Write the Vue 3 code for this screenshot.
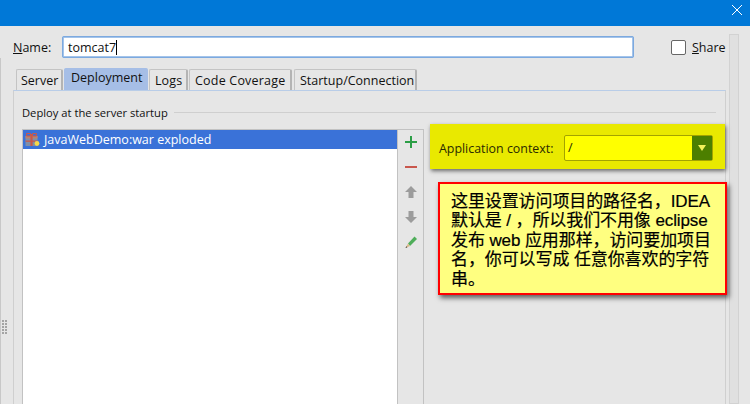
<script setup>
const tabs = [
  { label: 'Server', active: false },
  { label: 'Deployment', active: true },
  { label: 'Logs', active: false },
  { label: 'Code Coverage', active: false },
  { label: 'Startup/Connection', active: false }
]
const grip = Array.from({ length: 10 })
</script>

<template>
  <div class="window">
    <header class="titlebar">
      <svg class="close" width="12" height="12" viewBox="0 0 12 12"><path d="M1 1 L11 11 M11 1 L1 11" stroke="#fff" stroke-width="1" fill="none" /></svg>
    </header>
    <div class="content">
      <div class="left-edge">
        <div class="grip"><i v-for="(g, i) in grip" :key="i"></i></div>
      </div>
      <main class="main">
        <div class="name-row">
          <label class="name-label"><u>N</u>ame:</label>
          <div class="name-input"><span>tomcat7</span><b class="caret"></b></div>
          <div class="share"><span class="check"></span><span><u>S</u>hare</span></div>
        </div>
        <nav class="tabs">
          <div v-for="t in tabs" :key="t.label" class="tab" :class="{ active: t.active }">{{ t.label }}</div>
        </nav>
        <section class="panel">
          <div class="group-title"><span>Deploy at the server startup</span><i></i></div>
          <div class="deploy">
            <div class="list">
              <div class="row">
                <svg class="artifact" width="15" height="15" viewBox="0 0 15 15">
                  <rect x="0.5" y="4" width="12" height="10" fill="#7f8ea8" />
                  <rect x="0.5" y="4" width="12" height="2.5" fill="#b9826f" />
                  <rect x="5.4" y="2" width="2.2" height="12" fill="#c9584a" />
                  <path d="M1.5 1.5 H5.5 V4 H1.5 Z M11.5 1.5 H7.5 V4 H11.5 Z" stroke="#c9584a" fill="none" />
                  <rect x="0.5" y="8.5" width="12" height="1.3" fill="#c9584a" />
                  <circle cx="12" cy="11.5" r="2.4" fill="#f5d94a" />
                </svg>
                <span>JavaWebDemo:war exploded</span>
              </div>
            </div>
            <div class="tools">
              <svg width="14" height="14" viewBox="0 0 14 14"><path d="M7 1 V13 M1 7 H13" stroke="#2c9e46" stroke-width="2" fill="none" /></svg>
              <svg width="14" height="14" viewBox="0 0 14 14"><path d="M1 7 H13" stroke="#c9574d" stroke-width="2" fill="none" /></svg>
              <svg width="14" height="14" viewBox="0 0 14 14"><path d="M7 1 L13 7 H9.5 V13 H4.5 V7 H1 Z" fill="#9c9c9c" /></svg>
              <svg width="14" height="14" viewBox="0 0 14 14"><path d="M7 13 L13 7 H9.5 V1 H4.5 V7 H1 Z" fill="#9c9c9c" /></svg>
              <svg width="14" height="14" viewBox="0 0 14 14">
                <path d="M4 8.5 L10.5 1.5 L13 4 L6 11 Z" fill="#4fae5a" />
                <path d="M4 8.5 L6 11 L1.5 13 Z" fill="#d9b98a" />
                <path d="M2.4 11.2 L3.4 12.2 L1.5 13 Z" fill="#333" />
              </svg>
            </div>
            <div class="side"></div>
          </div>
        </section>
      </main>
      <aside class="scrollbar"></aside>
    </div>

    <div class="context-popup">
      <span class="context-label">Application context:</span>
      <div class="combo">
        <span class="combo-value">/</span>
        <span class="combo-btn"><i></i></span>
      </div>
    </div>

    <div class="note">这里设置访问项目的路径名，IDEA 默认是 / ，所以我们不用像 eclipse 发布 web 应用那样，访问要加项目名，你可以写成 任意你喜欢的字符串。</div>
  </div>
</template>

<style scoped>
.window {
  width: 750px;
  height: 404px;
  overflow: hidden;
  position: relative;
  background: #e6e6e6;
  font-family: "Open Sans", "Noto Sans", sans-serif;
  font-size: 12.5px;
  color: #111;
  display: flex;
  flex-direction: column;
}
.titlebar {
  height: 26px;
  flex: none;
  background: #0078d7;
  display: flex;
  justify-content: flex-end;
  align-items: center;
  padding-right: 7px;
}
.close { display: block; margin-top: -6px; }
.content { flex: 1; display: flex; min-height: 0; }
.left-edge {
  width: 13px;
  flex: none;
  margin-top: 32px;
  border-left: 1px solid #c8c8c8;
  box-sizing: border-box;
  padding-top: 262px;
}
.grip {
  width: 6px;
  margin-left: 1px;
  display: grid;
  grid-template-columns: 2px 2px;
  gap: 1px 1px;
}
.grip i { width: 2px; height: 2px; background: #a4a4a4; }
.main { width: 713px; flex: none; display: flex; flex-direction: column; min-height: 0; }
.name-row {
  height: 42px;
  flex: none;
  display: flex;
  align-items: center;
  box-sizing: border-box;
}
.name-label { width: 49px; flex: none; }
.name-input {
  width: 572px;
  height: 22px;
  flex: none;
  box-sizing: border-box;
  background: #fff;
  border: 2px solid #a4c4ea;
  border-radius: 2px;
  padding-left: 4px;
  display: flex;
  align-items: center;
  outline: 1px solid #7ca9df;
  outline-offset: -1px;
}
.caret { width: 1px; height: 15px; background: #000; margin-left: 0; }
.share { display: flex; align-items: center; gap: 6px; margin-left: 37px; }
.check {
  width: 13px;
  height: 13px;
  background: #fff;
  border: 1px solid #666;
  border-radius: 2px;
  box-sizing: content-box;
}
.tabs { height: 22px; flex: none; display: flex; gap: 1px; padding-left: 3px; align-items: flex-end; }
.tab {
  height: 21px;
  box-sizing: border-box;
  padding: 0 4px;
  line-height: 21px;
  background: #e6e6e6;
  border: 1px solid #c4c4c4;
  border-bottom: 0;
  border-right: 2px solid #b4b4b4;
  border-radius: 2px 2px 0 0;
  white-space: nowrap;
}
.tab:nth-child(1) { width: 47px; }
.tab:nth-child(2) { width: 84px; }
.tab:nth-child(3) { width: 39px; padding-left: 5px; letter-spacing: 0.1px; }
.tab:nth-child(4) { width: 103px; padding-left: 5px; letter-spacing: 0.2px; }
.tab:nth-child(5) { width: 123px; margin-left: 1px; padding-left: 5px; }
.tab.active {
  height: 22px;
  background: #a6bee6;
  border-color: #a6bee6;
  line-height: 18px;
  padding: 0 6px;
}
.panel {
  flex: 1;
  box-sizing: border-box;
  border: 1px solid #cfcfcf;
  border-top: 1px solid #b9cde8;
  border-bottom: 0;
  padding: 12px 8px 0 8px;
  display: flex;
  flex-direction: column;
  min-height: 0;
}
.group-title { display: flex; align-items: center; gap: 6px; height: 18px; flex: none; margin-bottom: 8px; font-size: 11.2px; }
.group-title i { flex: 1; height: 1px; background: #cfcfcf; margin-right: 1px; }
.deploy { flex: 1; display: flex; min-height: 0; }
.list {
  width: 376px;
  flex: none;
  box-sizing: border-box;
  background: #fff;
  border: 1px solid #c2c2c2;
  border-bottom: 0;
}
.row {
  height: 19px;
  background: #3a72d8;
  color: #fff;
  display: flex;
  align-items: center;
  gap: 4px;
  padding-left: 2px;
}
.artifact { flex: none; }
.tools {
  width: 26px;
  flex: none;
  box-sizing: border-box;
  border-top: 1px solid #c2c2c2;
  border-right: 1px solid #c2c2c2;
  display: flex;
  flex-direction: column;
  align-items: center;
  gap: 11px;
  padding-top: 5px;
}
.side { flex: 1; }
.scrollbar {
  width: 10px;
  margin: 8px 0 0 3px;
  flex: none;
  box-sizing: border-box;
  border: 1px solid #d2d2d2;
  background: #e0e0e0;
}
.context-popup {
  position: absolute;
  left: 430px;
  top: 124px;
  width: 295px;
  height: 45px;
  box-sizing: border-box;
  background: #e9e900;
  box-shadow: 1px 2px 4px rgba(0,0,0,.55);
  display: flex;
  align-items: center;
  padding: 3px 0 0 9px;
  color: #2a2a00;
}
.context-label { width: 125px; flex: none; font-size: 12.4px; }
.combo {
  width: 149px;
  height: 26px;
  box-sizing: border-box;
  border: 1px solid #a3a300;
  border-radius: 2px;
  background: #ffff00;
  display: flex;
  align-items: stretch;
  justify-content: space-between;
}
.combo-value { padding-left: 3px; line-height: 24px; }
.combo-btn {
  width: 20px;
  background: #4c7f00;
  display: flex;
  align-items: center;
  justify-content: center;
}
.combo-btn i {
  width: 0;
  height: 0;
  border-left: 4px solid transparent;
  border-right: 4px solid transparent;
  border-top: 6px solid #f2f25a;
}
.note {
  position: absolute;
  left: 438px;
  top: 182px;
  width: 289px;
  height: 113px;
  box-sizing: border-box;
  background: #ffff80;
  border: 2px solid #f00;
  box-shadow: 2px 3px 5px rgba(0,0,0,.6);
  padding: 7.5px 10px 0 11px;
  font-family: "Liberation Sans", "Noto Sans CJK SC", sans-serif;
  font-size: 17px;
  letter-spacing: -0.1px;
  line-height: 19.5px;
  color: #000;
  -webkit-text-stroke: 0.2px #000;
}
</style>
